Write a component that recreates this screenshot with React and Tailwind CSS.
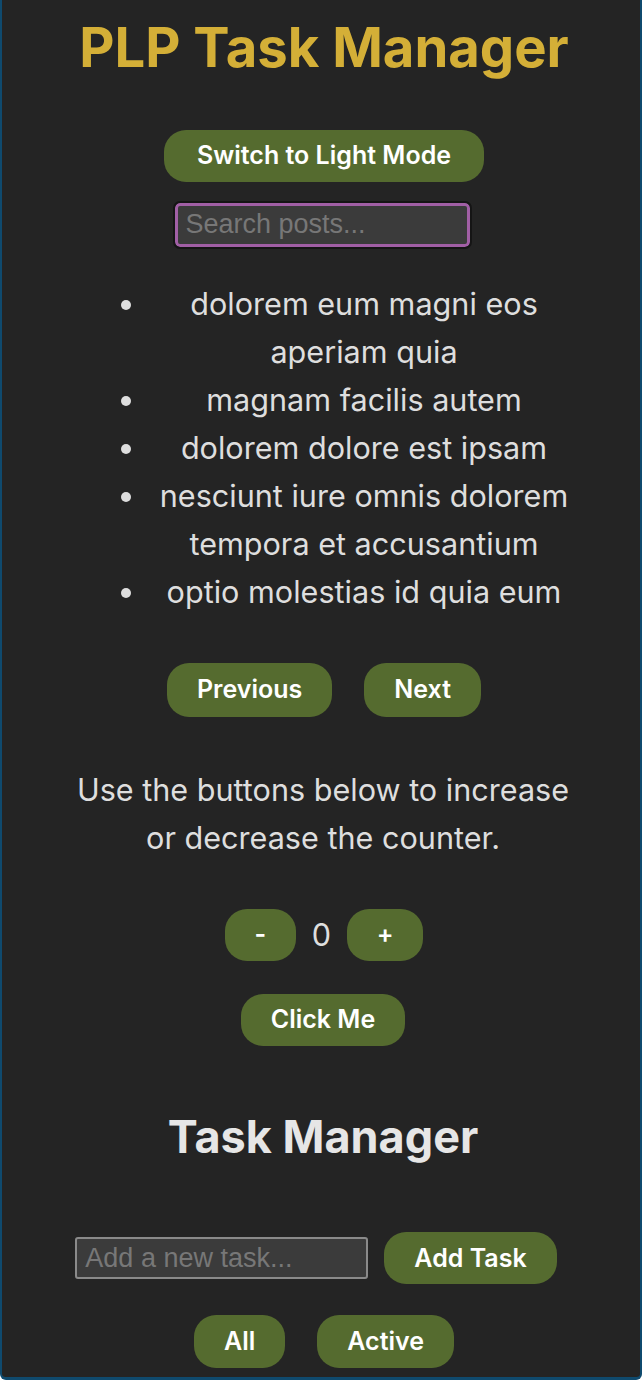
import React, { useState } from 'react';

const posts = [
    'dolorem eum magni eos aperiam quia',
    'magnam facilis autem',
    'dolorem dolore est ipsam',
    'nesciunt iure omnis dolorem tempora et accusantium',
    'optio molestias id quia eum',
];

const btn = "h-[52px] rounded-[22px] bg-[#556b2f] text-[25px] font-semibold text-white";

function App() {
    const [count, setCount] = useState(0);
    const [search, setSearch] = useState('');
    const [task, setTask] = useState('');

    return (
        <div className="h-[1380px] rounded-b-[6px] border-x-2 border-b-[3px] border-[#0f4a6e] bg-[#242424] font-['Inter',sans-serif] text-[#dedede]">
            <div className="flex flex-col items-center">
                <h1 className="ml-[6px] mt-[18px] text-[54.4px] font-bold leading-[1.1] text-[#d4af37]">PLP Task Manager</h1>

                <button className={`${btn} ml-[6px] mt-[52px] px-[33px]`}>Switch to Light Mode</button>

                <input
                    value={search}
                    onChange={(e) => setSearch(e.target.value)}
                    placeholder="Search posts..."
                    className="ml-[2px] mt-[21px] h-[44px] w-[295px] rounded-[5px] border-[3px] border-[#a15fa5] bg-[#3b3b3b] px-2 font-['Liberation_Sans',sans-serif] text-[27px] text-white outline outline-2 outline-[#151515] placeholder:text-[#777]"
                />

                <ul className="ml-[106px] mt-[33px] w-[472px] list-disc self-start pl-10 text-center text-[30.6px] leading-[48px]">
                    {posts.map((p) => (
                        <li key={p}>{p}</li>
                    ))}
                </ul>

                <div className="ml-[6px] mt-[47px] flex gap-8">
                    <button className={`${btn} h-[54px] px-[30px]`}>Previous</button>
                    <button className={`${btn} h-[54px] px-[30px]`}>Next</button>
                </div>

                <p className="ml-[4px] mt-[49px] w-[510px] text-center text-[30.6px] leading-[48px]">
                    Use the buttons below to increase or decrease the counter.
                </p>

                <div className="ml-[6px] mt-[47px] flex items-center gap-[16px]">
                    <button className={`${btn} w-[71px]`} onClick={() => setCount(count - 1)}>-</button>
                    <span className="text-[30.6px]">{count}</span>
                    <button className={`${btn} w-[76px]`} onClick={() => setCount(count + 1)}>+</button>
                </div>

                <button className={`${btn} ml-[4px] mt-[33px] px-[30px]`}>Click Me</button>

                <h2 className="ml-[4px] mt-[66px] text-[45px] font-bold leading-[1.1] text-[#e6e6e6]">Task Manager</h2>

                <div className="mr-[10px] mt-[71px] flex items-center gap-4">
                    <input
                        value={task}
                        onChange={(e) => setTask(e.target.value)}
                        placeholder="Add a new task..."
                        className="h-[42px] w-[293px] rounded-[3px] border-2 border-[#8a8a8a] bg-[#3b3b3b] px-2 font-['Liberation_Sans',sans-serif] text-[27px] text-white placeholder:text-[#777]"
                    />
                    <button className={`${btn} px-[30px]`}>Add Task</button>
                </div>

                <div className="ml-[6px] mt-[31px] flex gap-8">
                    <button className={`${btn} h-[53px] px-[30px]`}>All</button>
                    <button className={`${btn} h-[53px] px-[30px]`}>Active</button>
                </div>
            </div>
        </div>
    );
}

export default App;
